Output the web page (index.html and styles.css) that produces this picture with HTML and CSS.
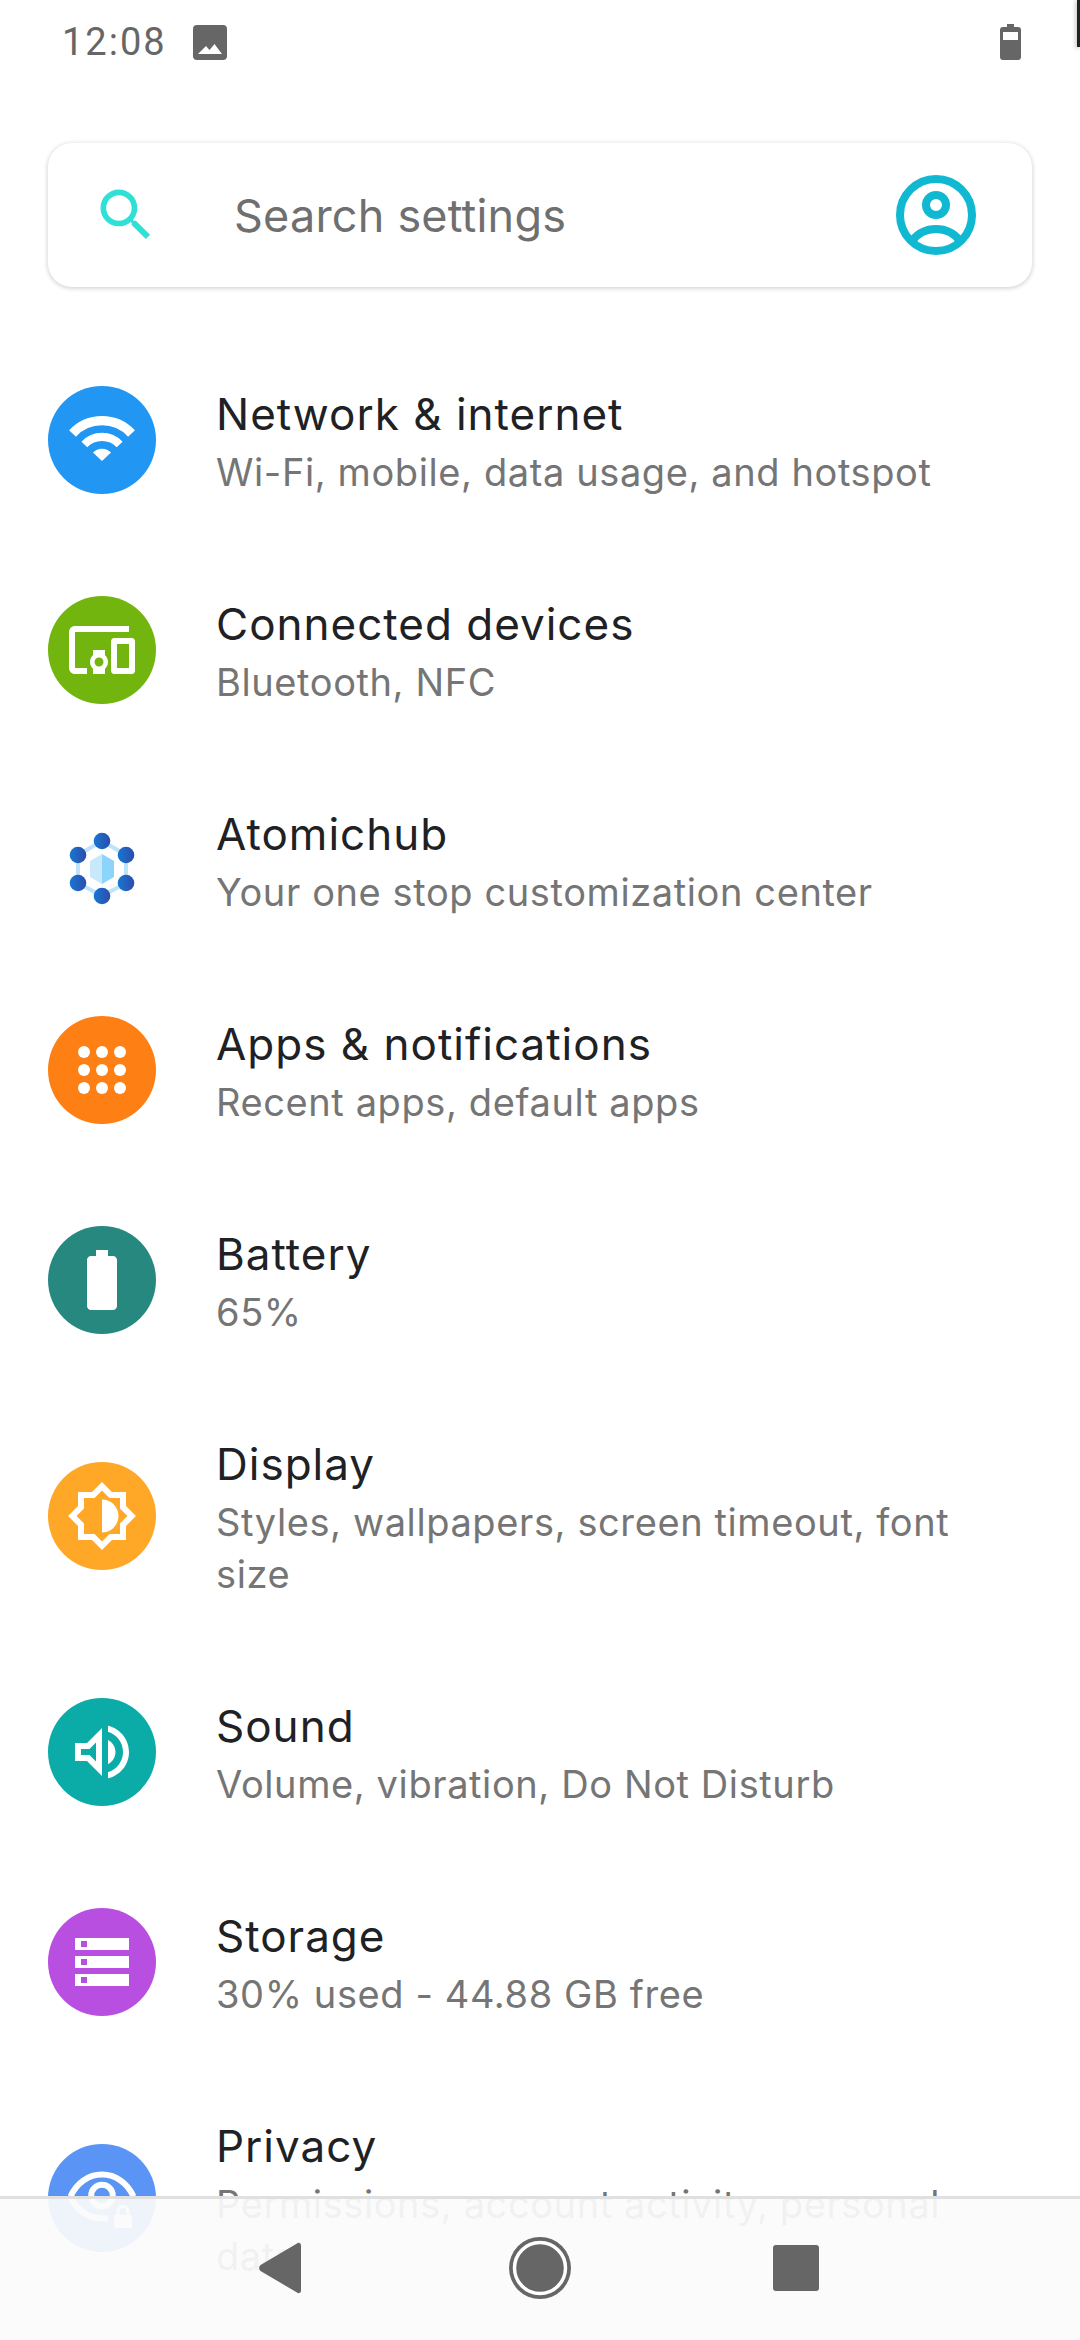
FILE: index.html
```html
<!DOCTYPE html>
<html lang="en">
<head>
    <meta charset="UTF-8">
    <title>Settings</title>
    <link rel="stylesheet" href="styles.css">
</head>
<body>

<div class="screen">
    <div class="edge-mark"></div>
    <div class="status-bar">
        <span class="clock">12:08</span>
        <svg class="image-icon" viewBox="0 0 34 35"><path d="M4 0h26a4 4 0 0 1 4 4v27a4 4 0 0 1-4 4H4a4 4 0 0 1-4-4V4a4 4 0 0 1 4-4zM5 29h24l-7.500-10-5 6-3.500-4z" fill-rule="evenodd"/></svg>
        <span class="status-gap"></span>
        <svg class="battery-icon" viewBox="0 0 21 36"><path fill-rule="evenodd" d="M7 0h7v3h4a3 3 0 0 1 3 3v27a3 3 0 0 1-3 3H3a3 3 0 0 1-3-3V6a3 3 0 0 1 3-3h4zM3 8v8h15V8z"/></svg>
    </div>

    <div class="search-card">
        <svg class="search-icon" viewBox="0 0 24 24"><path d="M15.500 14h-.79l-.28-.27C15.410 12.590 16 11.110 16 9.500 16 5.910 13.090 3 9.500 3S3 5.910 3 9.500 5.910 16 9.500 16c1.610 0 3.090-.59 4.230-1.570l.27.28v.79l5 4.990L20.490 19l-4.990-5zm-6 0C7.010 14 5 11.990 5 9.500S7.010 5 9.500 5 14 7.010 14 9.500 11.990 14 9.500 14z"/></svg>
        <span class="search-text">Search settings</span>
        <svg class="avatar" viewBox="0 0 80 80">
            <circle cx="40" cy="40" r="36" fill="none" stroke="#10b8d2" stroke-width="8"/>
            <circle cx="40" cy="30" r="10" fill="none" stroke="#10b8d2" stroke-width="8"/>
            <path d="M16 66C22 58 31 54 40 54s18 4 24 12" fill="none" stroke="#10b8d2" stroke-width="8"/>
        </svg>
    </div>

    <div class="list">
        <div class="row">
            <div class="icon blue"><svg viewBox="0 0 24 24">
                <path class="arc" stroke-width="3.100" d="M2.170 9.830A13.450 13.450 0 0 1 21.830 9.830"/>
                <path class="arc" stroke-width="2.700" d="M6.120 13.510A8.050 8.050 0 0 1 17.880 13.510"/>
                <path d="M12 19L9 16.200A4.100 4.100 0 0 1 15 16.200z"/>
            </svg></div>
            <div class="row-text">
                <div class="title">Network &amp; internet</div>
                <div class="sub">Wi-Fi, mobile, data usage, and hotspot</div>
            </div>
        </div>
        <div class="row">
            <div class="icon green"><svg viewBox="0 0 24 24"><path d="M3 6h18V4H3c-1.100 0-2 .9-2 2v12c0 1.100.9 2 2 2h4v-2H3V6zm10 6H9v1.780c-.61.55-1 1.330-1 2.220s.39 1.670 1 2.220V20h4v-1.780c.61-.55 1-1.340 1-2.220s-.39-1.670-1-2.220V12zm-2 5.500c-.83 0-1.500-.67-1.500-1.500s.67-1.500 1.500-1.500 1.500.67 1.500 1.500-.67 1.500-1.500 1.500zM22 8h-6c-.5 0-1 .5-1 1v10c0 .5.5 1 1 1h6c.5 0 1-.5 1-1V9c0-.5-.5-1-1-1zm-1 10h-4v-8h4v8z"/></svg></div>
            <div class="row-text">
                <div class="title">Connected devices</div>
                <div class="sub">Bluetooth, NFC</div>
            </div>
        </div>
        <div class="row">
            <div class="icon logo"><svg viewBox="0 0 108 108">
                <defs>
                    <linearGradient id="node"><stop offset="0" stop-color="#1678d2"/><stop offset="1" stop-color="#2f4bab"/></linearGradient>
                </defs>
                <path d="M54 35L78 49V77L54 90L30 77V49z" fill="none" stroke="#bfe3fa" stroke-width="4"/>
                <path d="M54 48L42 55V71L54 78z" fill="#c8e8fc"/>
                <path d="M54 48L66 55V71L54 78z" fill="#8dd4fb"/>
                <circle cx="54" cy="35" r="8.300" fill="url(#node)"/>
                <circle cx="30" cy="49" r="8.300" fill="url(#node)"/>
                <circle cx="78" cy="49" r="8.300" fill="url(#node)"/>
                <circle cx="30" cy="77" r="8.300" fill="url(#node)"/>
                <circle cx="78" cy="77" r="8.300" fill="url(#node)"/>
                <circle cx="54" cy="90" r="8.300" fill="url(#node)"/>
            </svg></div>
            <div class="row-text">
                <div class="title">Atomichub</div>
                <div class="sub">Your one stop customization center</div>
            </div>
        </div>
        <div class="row">
            <div class="icon orange"><svg viewBox="0 0 24 24">
                <circle cx="6" cy="6" r="2"/><circle cx="12" cy="6" r="2"/><circle cx="18" cy="6" r="2"/>
                <circle cx="6" cy="12" r="2"/><circle cx="12" cy="12" r="2"/><circle cx="18" cy="12" r="2"/>
                <circle cx="6" cy="18" r="2"/><circle cx="12" cy="18" r="2"/><circle cx="18" cy="18" r="2"/>
            </svg></div>
            <div class="row-text">
                <div class="title">Apps &amp; notifications</div>
                <div class="sub">Recent apps, default apps</div>
            </div>
        </div>
        <div class="row">
            <div class="icon teal"><svg viewBox="0 0 24 24"><path d="M15.670 4H14V2h-4v2H8.330C7.600 4 7 4.600 7 5.330v15.340C7 21.400 7.600 22 8.330 22h7.340c.73 0 1.330-.6 1.330-1.330V5.330C17 4.600 16.400 4 15.670 4z"/></svg></div>
            <div class="row-text">
                <div class="title">Battery</div>
                <div class="sub">65%</div>
            </div>
        </div>
        <div class="row">
            <div class="icon amber"><svg viewBox="0 0 24 24"><path d="M20 15.310L23.310 12 20 8.690V4h-4.690L12 .69 8.690 4H4v4.690L.69 12 4 15.310V20h4.690L12 23.310 15.310 20H20v-4.690zM18 14.480V18h-3.520L12 20.480 9.520 18H6v-3.520L3.520 12 6 9.520V6h3.520L12 3.520 14.480 6H18v3.520L20.480 12 18 14.480zM12 6.500v11c3.030 0 5.500-2.470 5.500-5.500S15.030 6.500 12 6.500z"/></svg></div>
            <div class="row-text">
                <div class="title">Display</div>
                <div class="sub">Styles, wallpapers, screen timeout, font size</div>
            </div>
        </div>
        <div class="row">
            <div class="icon cyan"><svg viewBox="0 0 24 24"><path fill-rule="evenodd" d="M3 9v6h4l5 5V4L7 9H3zm2 2h2.830L10 8.830v6.340L7.830 13H5v-2z"/><path d="M14 7.970v8.050c1.480-.73 2.500-2.250 2.500-4.020 0-1.770-1.020-3.290-2.500-4.030zM14 3.230v2.060c2.890.86 5 3.540 5 6.710s-2.110 5.850-5 6.710v2.060c4.010-.91 7-4.490 7-8.770s-2.990-7.860-7-8.770z"/></svg></div>
            <div class="row-text">
                <div class="title">Sound</div>
                <div class="sub">Volume, vibration, Do Not Disturb</div>
            </div>
        </div>
        <div class="row">
            <div class="icon purple"><svg viewBox="0 0 24 24"><path fill-rule="evenodd" d="M3 20h18v-4H3v4zm2-3h2v2H5v-2zM3 4v4h18V4H3zm4 3H5V5h2v2zm-4 7h18v-4H3v4zm2-3h2v2H5v-2z"/></svg></div>
            <div class="row-text">
                <div class="title">Storage</div>
                <div class="sub">30% used - 44.88 GB free</div>
            </div>
        </div>
        <div class="row">
            <div class="icon periwinkle"><svg viewBox="0 0 24 24">
                <path class="arc" stroke-width="2" d="M1.500 11.500C3.500 7 7.500 4.200 12 4.200s8.500 2.800 10.500 7.300"/>
                <path class="arc" stroke-width="2" d="M1.500 11.500C3.500 16 7.500 18.800 12 18.800h2"/>
                <circle class="arc" stroke-width="2" cx="12" cy="11.200" r="3.600"/>
                <rect x="16" y="17.500" width="6" height="4.500" rx=".6"/>
                <path class="arc" stroke-width="1" d="M17.300 17.500v-1a1.700 1.700 0 0 1 3.400 0v1"/>
            </svg></div>
            <div class="row-text">
                <div class="title">Privacy</div>
                <div class="sub">Permissions, account activity, personal data</div>
            </div>
        </div>
    </div>

    <div class="nav-bar">
        <svg class="nav-icon" viewBox="0 0 72 72"><path d="M53 13.500c0-2.500-2.500-3.500-4-2L12.500 33c-1.800 1.500-1.800 4.500 0 6L49 60.500c1.500 1.500 4 .5 4-2z"/></svg>
        <svg class="nav-icon" viewBox="0 0 72 72"><circle cx="36" cy="36" r="31"/><circle cx="36" cy="36" r="25.500" fill="none" stroke="#fff" stroke-width="3.500"/></svg>
        <svg class="nav-icon" viewBox="0 0 72 72"><rect x="13" y="13" width="46" height="46" rx="3"/></svg>
    </div>
</div>

</body>
</html>
```

FILE: styles.css
```css
html, body {
    margin: 0;
    padding: 0;
    height: 100%;
    overflow: hidden;
    background-color: #fff;
    font-family: Inter, Roboto, sans-serif;
}
.screen {
    position: relative;
    height: 2340px;
    overflow: hidden;
}
.edge-mark {
    position: absolute;
    top: 0;
    right: 0;
    width: 3px;
    height: 47px;
    background-color: #222;
    box-shadow: -1px 1px 4px rgba(0, 0, 0, 0.3);
}
.status-bar {
    display: flex;
    align-items: center;
    height: 84px;
    padding: 0 59px 0 62px;
    color: #666;
    fill: #666;
}
.clock {
    font-family: Roboto, sans-serif;
    font-size: 38px;
    letter-spacing: 2px;
}
.image-icon {
    width: 34px;
    height: 35px;
    margin-left: 26px;
}
.status-gap {
    flex: 1;
}
.battery-icon {
    width: 21px;
    height: 36px;
}
.search-card {
    display: flex;
    align-items: center;
    height: 144px;
    margin: 59px 48px 0;
    padding: 0 56px 0 44px;
    background-color: #fff;
    border-radius: 24px;
    box-shadow: 0 1px 5px rgba(0, 0, 0, 0.22);
}
.search-icon {
    width: 68px;
    height: 68px;
    fill: #2fe0d6;
}
.search-text {
    flex: 1;
    margin-left: 74px;
    font-size: 45px;
    letter-spacing: 0.2px;
    color: #6f6f6f;
}
.avatar {
    width: 80px;
    height: 80px;
}
.list {
    margin-top: 48px;
}
.row {
    display: flex;
    align-items: center;
    padding: 47px 70px 47px 48px;
}
.icon {
    flex: none;
    display: flex;
    align-items: center;
    justify-content: center;
    width: 108px;
    height: 108px;
    border-radius: 50%;
    fill: #fff;
}
.icon svg {
    width: 72px;
    height: 72px;
}
.icon.logo svg {
    width: 108px;
    height: 108px;
}
.arc {
    fill: none;
    stroke: #fff;
}
.blue { background-color: #2196f3; }
.green { background-color: #72b50e; }
.orange { background-color: #fe7f14; }
.teal { background-color: #26887e; }
.amber { background-color: #ffa726; }
.cyan { background-color: #0baca8; }
.purple { background-color: #b94fe0; }
.periwinkle { background-color: #5a95f5; }
.row-text {
    margin-left: 60px;
}
.title {
    font-size: 44px;
    line-height: 64px;
    letter-spacing: 1px;
    color: #202124;
}
.sub {
    font-size: 38px;
    line-height: 52px;
    letter-spacing: 0.6px;
    color: #757575;
}
.nav-bar {
    position: absolute;
    left: 0;
    right: 0;
    bottom: 0;
    display: flex;
    align-items: center;
    justify-content: center;
    gap: 184px;
    height: 138px;
    padding-bottom: 3px;
    border-top: 3px solid #e0e0e0;
    background-color: rgba(251, 251, 251, 0.93);
    fill: #666;
}
.nav-icon {
    width: 72px;
    height: 72px;
}
```
